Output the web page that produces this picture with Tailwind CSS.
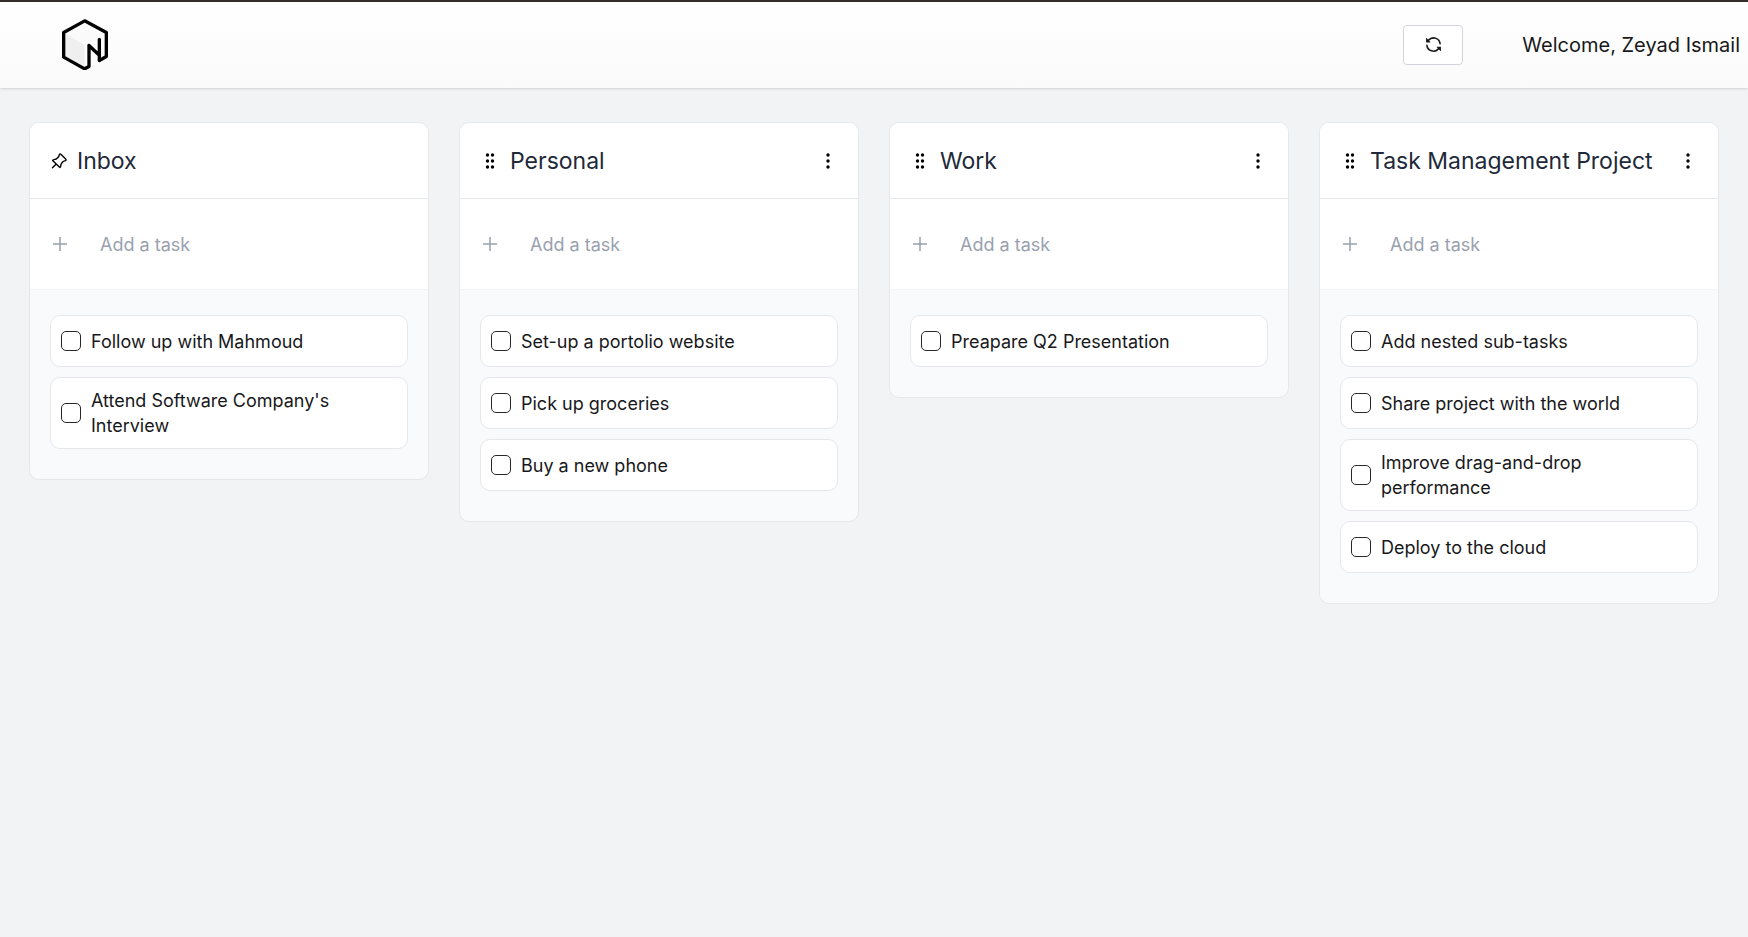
<!DOCTYPE html>
<html lang="en">

<head>
    <meta charset="UTF-8">
    <meta name="viewport" content="width=device-width, initial-scale=1.0">
    <title>Tasks</title>
    <script src="https://cdn.jsdelivr.net/npm/@tailwindcss/browser@4"></script>
</head>

<body class="min-h-screen bg-[#f2f3f5] font-['Inter',sans-serif] text-[#18181b]">
    <!-- icon sprites -->
    <svg class="hidden">
        <symbol id="grip" viewBox="0 0 10 16">
            <circle cx="2.5" cy="2" r="1.7" /><circle cx="2.5" cy="8" r="1.7" /><circle cx="2.5" cy="14" r="1.7" />
            <circle cx="7.5" cy="2" r="1.7" /><circle cx="7.5" cy="8" r="1.7" /><circle cx="7.5" cy="14" r="1.7" />
        </symbol>
        <symbol id="dots" viewBox="0 0 4 16">
            <circle cx="2" cy="2" r="1.7" /><circle cx="2" cy="8" r="1.7" /><circle cx="2" cy="14" r="1.7" />
        </symbol>
        <symbol id="plus" viewBox="0 0 14 14">
            <path d="M7 0v14M0 7h14" stroke="currentColor" stroke-width="1.5" />
        </symbol>
    </svg>

    <header class="flex h-[88px] items-center justify-between border-t-2 border-[#332d2b] bg-linear-to-b from-white to-[#fafafa] pr-2 pb-px pl-[62px] shadow">
        <a href="#" aria-label="Home">
            <svg class="h-[51px] w-[46px]" viewBox="66 58 138 152" fill="none">
                <path d="M71 98l63 37v72l-63-35z" fill="#efefef" />
                <path d="M71 98l63-35 65 35-65 37z" fill="#fafafa" />
                <path d="M147 137v63l-13 7-63-35V98l63-35 65 35v72l-21 12v-63M147 137l31 29" stroke="#000" stroke-width="10" stroke-linecap="round" stroke-linejoin="round" />
            </svg>
        </a>
        <div class="flex items-center gap-[59px]">
            <button type="button" aria-label="Sync" class="flex h-10 w-[60px] items-center justify-center rounded border border-[#d1d5db] bg-white">
                <svg class="size-[17px]" viewBox="0 0 16 16" fill="currentColor">
                    <path d="M1.705 8.005a.75.75 0 0 1 .834.656 5.5 5.5 0 0 0 9.592 2.97l-1.204-1.204a.25.25 0 0 1 .177-.427h3.646a.25.25 0 0 1 .25.25v3.646a.25.25 0 0 1-.427.177l-1.38-1.38A7.002 7.002 0 0 1 1.05 8.84a.75.75 0 0 1 .656-.834ZM8 2.5a5.487 5.487 0 0 0-4.131 1.869l1.204 1.204A.25.25 0 0 1 4.896 6H1.25A.25.25 0 0 1 1 5.75V2.104a.25.25 0 0 1 .427-.177l1.38 1.38A7.002 7.002 0 0 1 14.95 7.16a.75.75 0 0 1-1.49.178A5.5 5.5 0 0 0 8 2.5Z" />
                </svg>
            </button>
            <p class="text-xl">Welcome, Zeyad Ismail</p>
        </div>
    </header>

    <main class="grid grid-cols-[repeat(auto-fit,minmax(380px,1fr))] items-start gap-[30px] px-[29px] pt-[34px] pb-8">
        <section class="overflow-hidden rounded-[10px] border border-gray-200 bg-[#f9fafc]">
            <div class="flex h-[76px] items-center border-b border-gray-200 bg-white px-[21px]">
                <svg class="mr-[10px] size-4 overflow-visible" viewBox="0 0 16 16" fill="none" stroke="black" stroke-width="1.4" stroke-linecap="round" stroke-linejoin="round">
                    <path d="M9.8 1.2l4.9 4.9c.6.7.4 1.2-.2 1.5-1.2.4-1.9.4-2.6 1.1-1.2 1.2-1.8 1.9-2 2.9-.1 1.1.1 2.1-1 2.9L1.6 7.4c.7-1.1 1.9-.9 3-1.1 1.2-.4 1.8-1.2 2.8-2.2.8-.9.6-2 1.1-2.8.4-.5.9-.5 1.3-.1zM5.2 11l-3.7 3.7" />
                </svg>
                <h2 class="pt-[2px] text-[23px] text-gray-800">Inbox</h2>
            </div>
            <form class="flex h-[91px] items-center gap-[33px] border-b border-gray-100 bg-white px-[23px] text-gray-400">
                <svg class="size-[14px]"><use href="#plus" /></svg>
                <input type="text" aria-label="New Inbox task" placeholder="Add a task" class="min-w-0 grow pt-[2px] text-lg outline-none placeholder:text-gray-400">
            </form>
            <ul class="flex flex-col gap-[10px] px-5 pt-[25px] pb-[30px] text-[18px] leading-[25px]">
                <li><label class="flex min-h-[52px] items-center gap-[10px] rounded-[10px] border border-gray-200 bg-white py-[10px] pr-12 pl-[10px]">
                    <input type="checkbox" class="size-5 shrink-0 appearance-none rounded-[5px] border border-[#27272a] checked:bg-[#27272a]">Follow up with Mahmoud</label></li>
                <li><label class="flex min-h-[52px] items-center gap-[10px] rounded-[10px] border border-gray-200 bg-white py-[10px] pr-12 pl-[10px]">
                    <input type="checkbox" class="size-5 shrink-0 appearance-none rounded-[5px] border border-[#27272a] checked:bg-[#27272a]">Attend Software Company's Interview</label></li>
            </ul>
        </section>

        <section class="overflow-hidden rounded-[10px] border border-gray-200 bg-[#f9fafc]">
            <div class="flex h-[76px] items-center border-b border-gray-200 bg-white px-[25px]">
                <svg class="mr-[15px] h-4 w-[10px]"><use href="#grip" /></svg>
                <h2 class="pt-[2px] text-[23px] text-gray-800">Personal</h2>
                <button type="button" aria-label="Personal menu" class="ml-auto px-[3px]"><svg class="h-4 w-1"><use href="#dots" /></svg></button>
            </div>
            <form class="flex h-[91px] items-center gap-[33px] border-b border-gray-100 bg-white px-[23px] text-gray-400">
                <svg class="size-[14px]"><use href="#plus" /></svg>
                <input type="text" aria-label="New Personal task" placeholder="Add a task" class="min-w-0 grow pt-[2px] text-lg outline-none placeholder:text-gray-400">
            </form>
            <ul class="flex flex-col gap-[10px] px-5 pt-[25px] pb-[30px] text-[18px] leading-[25px]">
                <li><label class="flex min-h-[52px] items-center gap-[10px] rounded-[10px] border border-gray-200 bg-white py-[10px] pr-12 pl-[10px]">
                    <input type="checkbox" class="size-5 shrink-0 appearance-none rounded-[5px] border border-[#27272a] checked:bg-[#27272a]">Set-up a portolio website</label></li>
                <li><label class="flex min-h-[52px] items-center gap-[10px] rounded-[10px] border border-gray-200 bg-white py-[10px] pr-12 pl-[10px]">
                    <input type="checkbox" class="size-5 shrink-0 appearance-none rounded-[5px] border border-[#27272a] checked:bg-[#27272a]">Pick up groceries</label></li>
                <li><label class="flex min-h-[52px] items-center gap-[10px] rounded-[10px] border border-gray-200 bg-white py-[10px] pr-12 pl-[10px]">
                    <input type="checkbox" class="size-5 shrink-0 appearance-none rounded-[5px] border border-[#27272a] checked:bg-[#27272a]">Buy a new phone</label></li>
            </ul>
        </section>

        <section class="overflow-hidden rounded-[10px] border border-gray-200 bg-[#f9fafc]">
            <div class="flex h-[76px] items-center border-b border-gray-200 bg-white px-[25px]">
                <svg class="mr-[15px] h-4 w-[10px]"><use href="#grip" /></svg>
                <h2 class="pt-[2px] text-[23px] text-gray-800">Work</h2>
                <button type="button" aria-label="Work menu" class="ml-auto px-[3px]"><svg class="h-4 w-1"><use href="#dots" /></svg></button>
            </div>
            <form class="flex h-[91px] items-center gap-[33px] border-b border-gray-100 bg-white px-[23px] text-gray-400">
                <svg class="size-[14px]"><use href="#plus" /></svg>
                <input type="text" aria-label="New Work task" placeholder="Add a task" class="min-w-0 grow pt-[2px] text-lg outline-none placeholder:text-gray-400">
            </form>
            <ul class="flex flex-col gap-[10px] px-5 pt-[25px] pb-[30px] text-[18px] leading-[25px]">
                <li><label class="flex min-h-[52px] items-center gap-[10px] rounded-[10px] border border-gray-200 bg-white py-[10px] pr-12 pl-[10px]">
                    <input type="checkbox" class="size-5 shrink-0 appearance-none rounded-[5px] border border-[#27272a] checked:bg-[#27272a]">Preapare Q2 Presentation</label></li>
            </ul>
        </section>

        <section class="overflow-hidden rounded-[10px] border border-gray-200 bg-[#f9fafc]">
            <div class="flex h-[76px] items-center border-b border-gray-200 bg-white px-[25px]">
                <svg class="mr-[15px] h-4 w-[10px]"><use href="#grip" /></svg>
                <h2 class="pt-[2px] text-[23px] text-gray-800">Task Management Project</h2>
                <button type="button" aria-label="Task Management Project menu" class="ml-auto px-[3px]"><svg class="h-4 w-1"><use href="#dots" /></svg></button>
            </div>
            <form class="flex h-[91px] items-center gap-[33px] border-b border-gray-100 bg-white px-[23px] text-gray-400">
                <svg class="size-[14px]"><use href="#plus" /></svg>
                <input type="text" aria-label="New Task Management Project task" placeholder="Add a task" class="min-w-0 grow pt-[2px] text-lg outline-none placeholder:text-gray-400">
            </form>
            <ul class="flex flex-col gap-[10px] px-5 pt-[25px] pb-[30px] text-[18px] leading-[25px]">
                <li><label class="flex min-h-[52px] items-center gap-[10px] rounded-[10px] border border-gray-200 bg-white py-[10px] pr-12 pl-[10px]">
                    <input type="checkbox" class="size-5 shrink-0 appearance-none rounded-[5px] border border-[#27272a] checked:bg-[#27272a]">Add nested sub-tasks</label></li>
                <li><label class="flex min-h-[52px] items-center gap-[10px] rounded-[10px] border border-gray-200 bg-white py-[10px] pr-12 pl-[10px]">
                    <input type="checkbox" class="size-5 shrink-0 appearance-none rounded-[5px] border border-[#27272a] checked:bg-[#27272a]">Share project with the world</label></li>
                <li><label class="flex min-h-[52px] items-center gap-[10px] rounded-[10px] border border-gray-200 bg-white py-[10px] pr-12 pl-[10px]">
                    <input type="checkbox" class="size-5 shrink-0 appearance-none rounded-[5px] border border-[#27272a] checked:bg-[#27272a]">Improve drag-and-drop performance</label></li>
                <li><label class="flex min-h-[52px] items-center gap-[10px] rounded-[10px] border border-gray-200 bg-white py-[10px] pr-12 pl-[10px]">
                    <input type="checkbox" class="size-5 shrink-0 appearance-none rounded-[5px] border border-[#27272a] checked:bg-[#27272a]">Deploy to the cloud</label></li>
            </ul>
        </section>
    </main>
</body>

</html>
